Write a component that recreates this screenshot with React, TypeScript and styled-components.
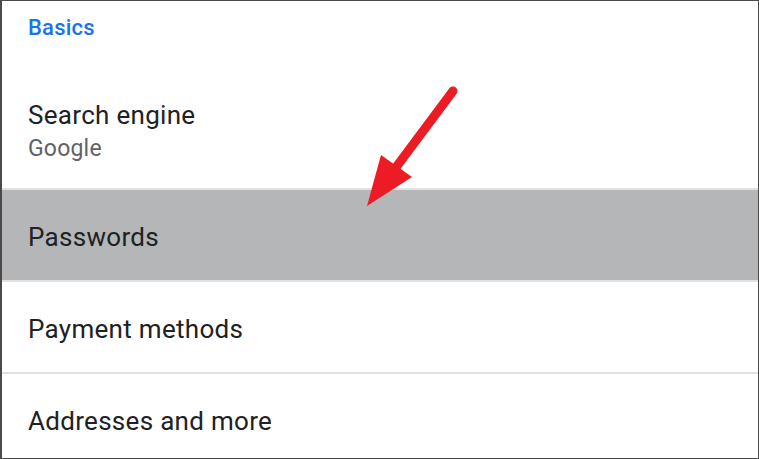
import React from "react";
import styled, { createGlobalStyle } from "styled-components";

const Global = createGlobalStyle`
  html, body { margin: 0; padding: 0; background: #ffffff; }
  body { font-family: Roboto, "Noto Sans", sans-serif; }
`;

const Frame = styled.div`
  position: relative;
  box-sizing: border-box;
  width: 759px;
  height: 459px;
  overflow: hidden;
  background: #ffffff;
  border-top: 1px solid #4a4a4a;
  border-right: 1px solid #4a4a4a;
  border-bottom: 1px solid #4a4a4a;
  border-left: 2px solid #4a4a4a;
  display: flex;
  flex-direction: column;
`;

const SectionHeader = styled.div`
  flex: none;
  height: 65px;
  box-sizing: border-box;
  padding: 14px 0 0 26px;
  font-size: 22px;
  line-height: 26px;
  letter-spacing: 0.2px;
  font-weight: 500;
  color: #1a73e8;
`;

const Row = styled.div<{ $h: number; $selected?: boolean; $divider?: boolean; $pt?: number }>`
  flex: none;
  height: ${(p) => p.$h}px;
  box-sizing: border-box;
  padding-left: 26px;
  padding-top: ${(p) => p.$pt ?? 4}px;
  display: flex;
  flex-direction: column;
  justify-content: center;
  background: ${(p) => (p.$selected ? "#b5b6b8" : "#ffffff")};
  border-bottom: ${(p) => (p.$divider ? "2px solid #e2e2e2" : "none")};
`;

const Title = styled.div`
  font-size: 26px;
  line-height: 32px;
  letter-spacing: 0.3px;
  color: #202124;
`;

const Subtitle = styled.div`
  margin-top: 3px;
  font-size: 23px;
  line-height: 30px;
  letter-spacing: 0.2px;
  color: #5f6368;
`;

const ArrowLayer = styled.svg`
  position: absolute;
  left: 0;
  top: 0;
  pointer-events: none;
`;

export default function App() {
  return (
    <>
      <Global />
      <Frame>
        <SectionHeader>Basics</SectionHeader>
        <Row $h={124} $pt={8} $divider>
          <Title>Search engine</Title>
          <Subtitle>Google</Subtitle>
        </Row>
        <Row $h={92} $selected $divider>
          <Title>Passwords</Title>
        </Row>
        <Row $h={92} $divider>
          <Title>Payment methods</Title>
        </Row>
        <Row $h={90}>
          <Title>Addresses and more</Title>
        </Row>
        <ArrowLayer width="759" height="459" viewBox="0 0 759 459">
          <line x1="451" y1="90" x2="395" y2="165" stroke="#ed1c24" strokeWidth="9" strokeLinecap="round" />
          <polygon points="365,205 379,154 410,176" fill="#ed1c24" />
        </ArrowLayer>
      </Frame>
    </>
  );
}
